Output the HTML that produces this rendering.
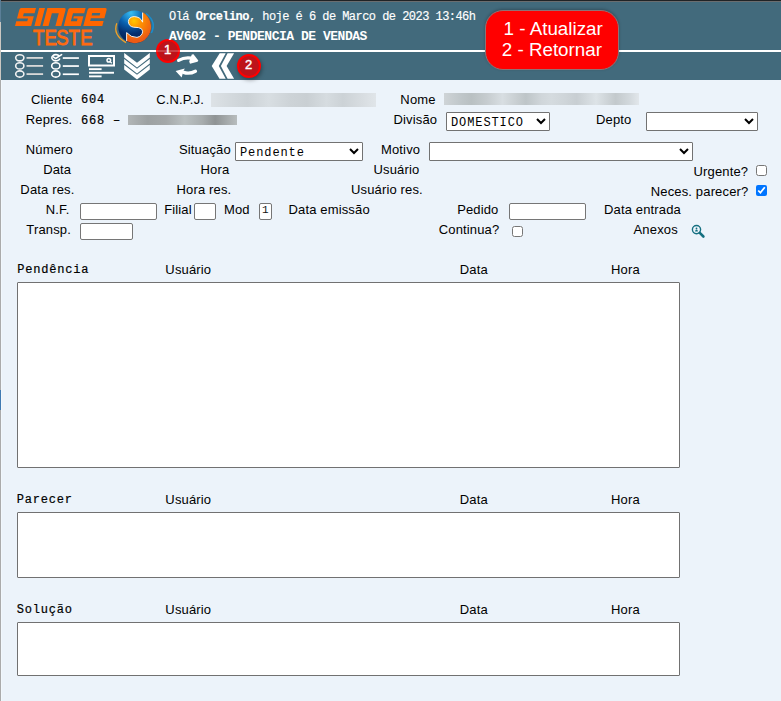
<!DOCTYPE html>
<html><head><meta charset="utf-8">
<style>
html,body{margin:0;padding:0;}
body{width:781px;height:701px;overflow:hidden;position:relative;background:#ecf3fa;font-family:"Liberation Sans",sans-serif;}
.abs{position:absolute;}
.t{position:absolute;white-space:pre;line-height:15px;color:#000;}
.sans{font-family:"Liberation Sans",sans-serif;font-size:13px;letter-spacing:0.15px;}
.mb{font-family:"Liberation Mono",monospace;font-size:12px;letter-spacing:0.8px;-webkit-text-stroke:0.2px #000;}
.hm{font-family:"Liberation Mono",monospace;font-size:12px;letter-spacing:-0.54px;color:#fff;-webkit-text-stroke:0.15px #fff;}
.hm2{font-family:"Liberation Mono",monospace;font-size:13px;letter-spacing:-0.47px;color:#fff;}
.tt{font-family:"Liberation Sans",sans-serif;font-size:18.8px;color:#fff;line-height:21px;}
#hdr{left:0;top:0;width:781px;height:80px;background:#426a7c;}
#topline{left:0;top:0;width:781px;height:1px;background:#202326;}
#topline2{left:0;top:1px;width:781px;height:1px;background:#6a6d6f;}
#wline{left:0;top:50px;width:781px;height:2px;background:#fff;}
#lcol{left:0;top:80px;width:1px;height:621px;background:#ababab;}
#lcolm{left:0;top:22px;width:1px;height:58px;background:#cbc8c2;}
#lcolt{left:0;top:0;width:1px;height:22px;background:#5b7f98;}
#lblue{left:0;top:390px;width:1px;height:20px;background:#3f7ab2;}
#lcol2{left:1px;top:80px;width:1px;height:621px;background:#f2f8fd;}
.tip{left:485px;top:10px;width:132px;height:58px;background:#ff0000;border:1px solid #8f7275;border-radius:18px;box-shadow:0 -1px 3px rgba(0,0,0,.25);}
.badge{width:20px;height:20px;border-radius:50%;background:#bd131a;border:2px solid #ff0000;}
.badge span{position:absolute;left:0;top:-1px;width:20px;text-align:center;color:#fff;font-size:13px;-webkit-text-stroke:0.4px #fff;line-height:20px;font-family:"Liberation Sans",sans-serif;}
select{position:absolute;box-sizing:border-box;margin:0;height:19px;padding:2px 0 0 0;font-family:"Liberation Mono",monospace;font-size:12px;letter-spacing:0.9px;border:1px solid #727272;border-radius:1px;background:#fff;color:#000;}
input[type=text]{position:absolute;box-sizing:border-box;margin:0;padding:0 2px;border:1px solid #767676;border-radius:2px;background:#fff;font-family:"Liberation Mono",monospace;font-size:13px;}
input[type=checkbox]{position:absolute;margin:0;width:11px;height:11px;}
textarea{position:absolute;box-sizing:border-box;margin:0;border:1px solid #717171;border-radius:1px;background:#fff;resize:none;left:17px;width:663px;}
.blur{position:absolute;filter:blur(1.5px);}
</style></head>
<body>
<div id="hdr" class="abs"></div>
<div id="topline" class="abs"></div>
<div id="topline2" class="abs"></div>
<div id="wline" class="abs"></div>

<!-- logo -->
<svg class="abs" style="left:0;top:0" width="160" height="50" viewBox="0 0 160 50">
  <g fill="#ff6600" transform="matrix(1 0 -0.267 1 6.94 0)">
    <!-- S: x 14.9..31.2 -->
    <path d="M16.5 8H31.2V13.3H20.4V16.2H31.2V26H15V21.3H26V18.4H15V10Q15 8 16.5 8Z"/>
    <!-- I -->
    <rect x="34.4" y="8" width="5.8" height="18"/>
    <!-- N -->
    <path d="M42.6 26V8H59.5Q61.3 8 61.3 10V26H55.4V13.3H48.5V26Z"/>
    <!-- G -->
    <path d="M65.5 8H80.8V13.3H69.6V21.3H75.6V18.4H71.2V16.2H80.8V26H63.8V10Q63.8 8 65.5 8Z"/>
    <!-- E -->
    <path d="M85 8H100.5Q102.3 8 102.3 10V18.2H88.8V21.1H102.3V26H83.3V10Q83.3 8 85 8ZM88.8 13.1V15.5H96.8V13.1Z" fill-rule="evenodd"/>
  </g>
  <g font-family="Liberation Sans" font-size="22" fill="#ff6a10" stroke="#ff6a10" stroke-width="0.9" transform="translate(0 44.6) scale(0.84 1)">
    <text x="39.3">T</text><text x="52.9">E</text><text x="66.9">S</text><text x="81.5">T</text><text x="95.6">E</text>
  </g>
  <!-- globe -->
  <defs>
    <radialGradient id="gb" gradientUnits="userSpaceOnUse" cx="131" cy="13" r="26">
      <stop offset="0" stop-color="#38c0f4"/>
      <stop offset="0.45" stop-color="#0a62b0"/>
      <stop offset="0.8" stop-color="#06306f"/>
      <stop offset="1" stop-color="#042760"/>
    </radialGradient>
    <radialGradient id="go" gradientUnits="userSpaceOnUse" cx="134" cy="21" r="20">
      <stop offset="0" stop-color="#ffc800"/>
      <stop offset="0.35" stop-color="#ff9300"/>
      <stop offset="1" stop-color="#ec5a14"/>
    </radialGradient>
  </defs>
  <circle cx="134.6" cy="26.8" r="16.4" fill="url(#gb)"/>
  <path d="M142.6 12.3A16.4 16.4 0 0 1 126.6 41.1L126.6 32.6Q131 37.6 137 37.4Q142.6 36 142.6 31.2Q142.4 28.2 138.5 27.6L133.5 27.2Q128.6 26.4 128.4 21.6Q128.8 16.8 134.2 16.6Q140.5 16.8 142.6 22.2Z" fill="url(#go)"/>
  <path d="M126.6 41.1L126.6 32.6Q131 37.6 137 37.4Q142.6 36 142.6 31.2Q142.4 28.2 138.5 27.6L133.5 27.2Q128.6 26.4 128.4 21.6Q128.8 16.8 134.2 16.6Q140.5 16.8 142.6 22.2L142.6 12.6" fill="none" stroke="#fff" stroke-width="0.9"/>
  <path d="M146 13.5Q157 22 151.3 33" stroke="#1a8ccc" stroke-width="1.5" fill="none"/>
  <path d="M116.8 23.3Q112.5 35 126 42.6" stroke="#f2a126" stroke-width="1.3" fill="none"/>
</svg>

<!-- toolbar icons -->
<svg class="abs" style="left:0;top:50px" width="260" height="32" viewBox="0 50 260 32">
  <g fill="none" stroke="#f2f2f2" stroke-width="1.6">
    <ellipse cx="19.8" cy="57.8" rx="4.1" ry="3.1"/>
    <ellipse cx="19.8" cy="65.9" rx="4.1" ry="3.1"/>
    <ellipse cx="19.8" cy="74" rx="4.1" ry="3.1"/>
  </g>
  <g fill="#d8d8d8">
    <rect x="26.5" y="57" width="16.6" height="1.8"/>
    <rect x="26.5" y="65" width="16.6" height="1.8"/>
    <rect x="26.5" y="73.2" width="16.6" height="1.8"/>
  </g>
  <g fill="none" stroke="#fff" stroke-width="1.6">
    <path d="M59.2 55.9A4.1 3.1 0 1 0 59.9 58.5"/>
    <path d="M53.2 56.9L55.7 58.5L61.6 54.6" stroke-width="1.6" stroke-linecap="round"/>
    <ellipse cx="55.8" cy="65.9" rx="4.1" ry="3.1"/>
    <ellipse cx="55.8" cy="74" rx="4.1" ry="3.1"/>
    
  </g>
  <g fill="#fff">
    <rect x="62.8" y="57.2" width="16.1" height="1.7"/>
    <rect x="62.8" y="65.2" width="16.1" height="1.7"/>
    <rect x="62.8" y="73.4" width="16.1" height="1.7"/>
  </g>
  <!-- icon3 -->
  <rect x="89" y="56" width="25" height="9.5" fill="none" stroke="#fff" stroke-width="2"/>
  <circle cx="108.8" cy="60.2" r="1.8" fill="none" stroke="#fff" stroke-width="1.5"/>
  <path d="M110.2 61.6L111.8 63.2" stroke="#fff" stroke-width="1.3"/>
  <g fill="#fff">
    <rect x="89" y="68.2" width="12.6" height="1.9"/>
    <rect x="89" y="71.8" width="25" height="1.9"/>
    <rect x="89" y="75.4" width="12.6" height="1.9"/>
  </g>
  <!-- triple chevron -->
  <g fill="#fff">
    <polygon points="124.2,53 137,62.8 149.8,53 149.8,57.6 137,67.4 124.2,57.6"/>
    <polygon points="124.2,59 137,68.8 149.8,59 149.8,63.6 137,73.4 124.2,63.6"/>
    <polygon points="124.2,65 137,74.8 149.8,65 149.8,69.6 137,79.4 124.2,69.6"/>
  </g>
  <!-- refresh -->
  <g fill="#fff">
    <path d="M178.6 60.4Q184.5 57 191.5 58.2" stroke="#fff" stroke-width="3.2" stroke-linecap="round" fill="none"/>
    <polygon points="191.8,54.4 193.5,54.2 198.3,60.4 197.5,61.8 190,63.8 189.2,61.5"/>
    <path d="M195.4 71.2Q189.5 74.4 183.5 72.4" stroke="#fff" stroke-width="3.4" stroke-linecap="round" fill="none"/>
    <polygon points="175.6,71 184.8,68.4 183.5,71 181.6,77.4"/>
  </g>
  <!-- double chevron -->
  <g fill="#fff">
    <polygon points="219.7,53.2 225.7,53.2 218.8,66 225.7,78.8 219.5,78.8 211.7,66"/>
    <polygon points="227.6,53.2 234.1,53.2 226.6,66 234.1,78.8 227.6,78.8 220.9,66"/>
  </g>
</svg>

<div class="abs badge" style="left:155.5px;top:38.6px"><span>1</span></div>
<div class="abs" style="left:155px;top:50px;width:25px;height:2px;background:rgba(255,255,255,.2)"></div>
<div class="abs badge" style="left:236.6px;top:53.8px;box-shadow:1px 2px 4px rgba(0,0,0,.35)"><span>2</span></div>

<div class="abs tip"></div>

<div id="lcolt" class="abs"></div>
<div id="lcol" class="abs"></div>
<div id="lcolm" class="abs"></div>
<div id="lblue" class="abs"></div>

<!-- blurred data -->
<div class="abs" style="left:211px;top:93px;width:165px;height:14px;background:linear-gradient(90deg,#dde2e6,#d3d9dd 12%,#ccd2d6 22%,#d8dee2 35%,#cdd3d7 48%,#c9cfd3 58%,#d6dce0 70%,#ccd2d6 80%,#d8dde1 92%,#e0e5e9)"></div>
<div class="abs" style="left:444px;top:93px;width:195px;height:12px;background:linear-gradient(90deg,#cfd4d7,#bfc6c9 9%,#b9c0c2 14%,#c6cccf 22%,#d8dee2 30%,#c9cfd2 37%,#bec5c8 42%,#d0d6da 50%,#d5dbdf 55%,#cfd5d9 62%,#c8ced2 68%,#dde3e7 78%,#c3c9cc 88%,#d2d8dc 95%,#e2e7eb)"></div>
<div class="abs" style="left:128px;top:115px;width:109px;height:10px;background:linear-gradient(90deg,#b2b6b7,#9da1a2 18%,#a4a8a9 35%,#bbc1c2 52%,#a8adae 68%,#8f9394 80%,#b8bdbe 100%)"></div>
<!-- controls -->
<select style="left:446px;top:112px;width:104px"><option>DOMESTICO</option></select>
<select style="left:646px;top:112px;width:112px"><option></option></select>
<select style="left:235px;top:142px;width:128px"><option>Pendente</option></select>
<select style="left:429px;top:142px;width:264px"><option></option></select>
<input type="checkbox" style="left:756px;top:165px">
<input type="checkbox" checked style="left:756px;top:185px">
<input type="text" style="left:80px;top:203px;width:77px;height:17px">
<input type="text" style="left:194px;top:203px;width:22px;height:17px">
<input type="text" value="1" style="left:259px;top:203px;width:13px;height:17px;padding:0 0 3px 2px;font-size:11px;color:#111">
<input type="text" style="left:509px;top:203px;width:77px;height:17px">
<input type="text" style="left:80px;top:223px;width:53px;height:17px">
<input type="checkbox" style="left:512px;top:226px">
<svg class="abs" style="left:688px;top:222px" width="20" height="20" viewBox="688 222 20 20">
  <circle cx="696.5" cy="229.6" r="4.1" fill="none" stroke="#146f80" stroke-width="1.4"/>
  <circle cx="696.5" cy="228.4" r="0.9" fill="#146f80"/>
  <path d="M695.1 231.6Q695.2 229.4 696.5 229.4Q697.8 229.4 697.9 231.6Z" fill="#146f80"/>
  <path d="M699.8 232.9L703.4 236.5" stroke="#146f80" stroke-width="2.6" stroke-linecap="round"/>
</svg>

<textarea style="top:282px;height:186px"></textarea>
<textarea style="top:512px;height:66px"></textarea>
<textarea style="top:622px;height:54px"></textarea>

<div id="lcol2" class="abs"></div>

<span id="h1" class="t hm" style="left:169.00px;top:10.00px">Olá <b>Orcelino</b>, hoje é 6 de Marco de 2023 13:46h</span>
<span id="h2" class="t hm2" style="left:169.00px;top:28.50px"><b>AV602 - PENDENCIA DE VENDAS</b></span>
<span id="tt1" class="t tt" style="left:503.55px;top:18.00px">1 - Atualizar</span>
<span id="tt2" class="t tt" style="left:501.76px;top:39.00px">2 - Retornar</span>
<span id="l_cli" class="t sans" style="left:31.00px;top:92.00px">Cliente</span>
<span id="v_cli" class="t mb" style="left:81.00px;top:93.40px">604</span>
<span id="l_cnpj" class="t sans" style="left:156.13px;top:92.00px">C.N.P.J.</span>
<span id="l_nome" class="t sans" style="left:400.36px;top:92.00px">Nome</span>
<span id="l_rep" class="t sans" style="left:25.76px;top:112.00px">Repres.</span>
<span id="v_rep" class="t mb" style="left:81.00px;top:114.00px">668 –</span>
<span id="l_div" class="t sans" style="left:393.51px;top:112.00px">Divisão</span>
<span id="l_dep" class="t sans" style="left:596.00px;top:112.00px">Depto</span>
<span id="l_num" class="t sans" style="left:25.76px;top:142.00px">Número</span>
<span id="l_sit" class="t sans" style="left:179.00px;top:142.00px">Situação</span>
<span id="l_mot" class="t sans" style="left:381.00px;top:142.00px">Motivo</span>
<span id="l_data" class="t sans" style="left:43.13px;top:162.00px">Data</span>
<span id="l_hora" class="t sans" style="left:200.51px;top:162.00px">Hora</span>
<span id="l_usu" class="t sans" style="left:373.51px;top:162.00px">Usuário</span>
<span id="l_urg" class="t sans" style="left:693.56px;top:164.00px">Urgente?</span>
<span id="l_datr" class="t sans" style="left:20.36px;top:182.00px">Data res.</span>
<span id="l_horr" class="t sans" style="left:176.51px;top:182.00px">Hora res.</span>
<span id="l_usur" class="t sans" style="left:351.00px;top:182.00px">Usuário res.</span>
<span id="l_nec" class="t sans" style="left:650.76px;top:184.00px">Neces. parecer?</span>
<span id="l_nf" class="t sans" style="left:45.76px;top:202.00px">N.F.</span>
<span id="l_fil" class="t sans" style="left:164.13px;top:202.00px">Filial</span>
<span id="l_mod" class="t sans" style="left:224.00px;top:202.00px">Mod</span>
<span id="l_dem" class="t sans" style="left:288.51px;top:202.00px">Data emissão</span>
<span id="l_ped" class="t sans" style="left:457.13px;top:202.00px">Pedido</span>
<span id="l_den" class="t sans" style="left:604.00px;top:202.00px">Data entrada</span>
<span id="l_tra" class="t sans" style="left:26.36px;top:222.00px">Transp.</span>
<span id="l_con" class="t sans" style="left:438.76px;top:222.00px">Continua?</span>
<span id="l_anx" class="t sans" style="left:633.56px;top:222.00px">Anexos</span>
<span id="s_pen" class="t mb" style="left:17.13px;top:263.00px">Pendência</span>
<span id="s_pen_u" class="t sans" style="left:165.36px;top:262.00px">Usuário</span>
<span id="s_pen_d" class="t sans" style="left:459.76px;top:262.00px">Data</span>
<span id="s_pen_h" class="t sans" style="left:611.00px;top:262.00px">Hora</span>
<span id="s_par" class="t mb" style="left:16.76px;top:493.00px">Parecer</span>
<span id="s_par_u" class="t sans" style="left:165.36px;top:492.00px">Usuário</span>
<span id="s_par_d" class="t sans" style="left:459.76px;top:492.00px">Data</span>
<span id="s_par_h" class="t sans" style="left:611.00px;top:492.00px">Hora</span>
<span id="s_sol" class="t mb" style="left:16.76px;top:603.00px">Solução</span>
<span id="s_sol_u" class="t sans" style="left:165.36px;top:602.00px">Usuário</span>
<span id="s_sol_d" class="t sans" style="left:459.76px;top:602.00px">Data</span>
<span id="s_sol_h" class="t sans" style="left:611.00px;top:602.00px">Hora</span>
</body></html>
